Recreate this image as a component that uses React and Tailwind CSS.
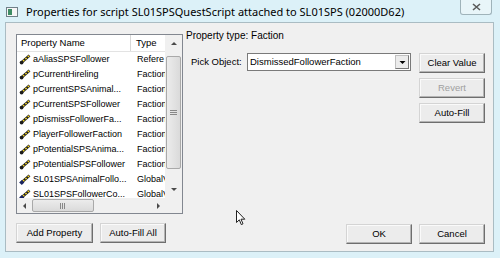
import React from "react";

const F = { fontFamily: "'Liberation Sans', Arial, sans-serif" };

function PropIcon({ global }) {
  return (
    <svg width="12" height="11" viewBox="0 0 12 11" className="shrink-0">
      <path d="M2.5 8.5 L10.5 1.5" stroke="#1c1c1c" strokeWidth="2.6" />
      <path d="M4 7.2 L5.2 6.1" stroke="#f0d020" strokeWidth="1.6" />
      <path d="M6.4 5.1 L7.6 4" stroke="#f0d020" strokeWidth="1.6" />
      <path d="M8.8 3 L10 1.9" stroke="#f0d020" strokeWidth="1.6" />
      {global ? (
        <path d="M2.8 6 L5.4 8.5 L2.8 11 L0.2 8.5 Z" fill="#1a2460" />
      ) : (
        <circle cx="2.6" cy="8.6" r="1.9" fill="#1c1c1c" />
      )}
    </svg>
  );
}

const rows = [
  ["aAliasSPSFollower", "Refere", false],
  ["pCurrentHireling", "Faction", false],
  ["pCurrentSPSAnimal...", "Faction", false],
  ["pCurrentSPSFollower", "Faction", false],
  ["pDismissFollowerFa...", "Faction", false],
  ["PlayerFollowerFaction", "Faction", false],
  ["pPotentialSPSAnima...", "Faction", false],
  ["pPotentialSPSFollower", "Faction", false],
  ["SL01SPSAnimalFollo...", "GlobalV", true],
  ["SL01SPSFollowerCo...", "GlobalV", true],
];

function Btn({ children, w, disabled }) {
  return (
    <div
      className={`flex items-center justify-center h-[20px] border border-[#d4d4d4] border-r-[#6e6e6e] border-b-[#6e6e6e] bg-[#ececec] text-[9.5px] shadow-[inset_-1px_-1px_0_#b4b4b4,inset_1px_1px_0_#fafafa] ${disabled ? "text-[#a0a0a0]" : "text-black"}`}
      style={{ width: w }}
    >
      {children}
    </div>
  );
}

function Arrow({ dir }) {
  const d = {
    up: "M1 5 L4 2 L7 5 Z",
    down: "M1 2 L4 5 L7 2 Z",
    left: "M5 1 L2 4 L5 7 Z",
    right: "M3 1 L6 4 L3 7 Z",
  }[dir];
  return (
    <svg width="8" height="8" viewBox="0 0 8 8">
      <path d={d} fill="#4a4a4a" />
    </svg>
  );
}

export default function App() {
  return (
    <div className="relative w-[500px] h-[258px] bg-[#dcf1f8] overflow-hidden" style={F}>
      {/* title bar */}
      <div className="flex items-start h-[22px]">
        <div className="ml-[6px] mt-[7px] w-[12px] h-[10px] border border-[#6f8088] bg-[#f6f6f6] flex">
          <div className="ml-[1px] mt-[1px] w-[4px] h-[6px] bg-[#3e8c64]" />
        </div>
        <div
          className="ml-[8px] mt-[4px] text-[11px] leading-[15px] text-black whitespace-nowrap"
          style={{ fontFamily: "'Noto Sans', 'Open Sans', sans-serif" }}
        >
          Properties for script SL01SPSQuestScript attached to SL01SPS (02000D62)
        </div>
        <div className="ml-auto mr-[8px] w-[32px] h-[15px] border border-[#9fb3ba] border-t-0 rounded-b-[3px] bg-[#e8f5f9] flex items-center justify-center">
          <svg width="9" height="8" viewBox="0 0 9 8">
            <path d="M1 1 L8 7 M8 1 L1 7" stroke="#5a5a5a" strokeWidth="1.6" />
          </svg>
        </div>
      </div>

      {/* client */}
      <div className="ml-[5px] w-[489px] h-[230px] border border-[#aabcc3] bg-[#f0f0f0] flex">
        {/* left */}
        <div className="pl-[10px] pt-[11px] flex flex-col">
          <div className="w-[167px] h-[180px] border border-[#828790] bg-white flex flex-col">
            <div className="flex flex-1 min-h-0">
              <div className="w-[148px] flex flex-col overflow-hidden">
                <div className="flex h-[17px] border-b border-[#e3e3e3] text-[9.5px] shrink-0">
                  <div className="w-[114px] pl-[4px] flex items-center border-r border-[#d8d8d8]">Property Name</div>
                  <div className="pl-[5px] flex items-center">Type</div>
                </div>
                {rows.map(([n, t, g]) => (
                  <div key={n} className="flex h-[15px] items-center text-[9px] whitespace-nowrap shrink-0">
                    <div className="w-[114px] pl-[2px] flex items-center gap-[2px] overflow-hidden">
                      <PropIcon global={g} />
                      <span>{n}</span>
                    </div>
                    <div className="pl-[6px] overflow-hidden w-[34px]">{t}</div>
                  </div>
                ))}
              </div>
              {/* vertical scrollbar */}
              <div className="w-[17px] bg-[#f0f0f0] flex flex-col items-center">
                <div className="h-[17px] flex items-center justify-center">
                  <Arrow dir="up" />
                </div>
                <div className="h-[4px]" />
                <div className="w-[15px] h-[113px] border border-[#a9a9a9] bg-gradient-to-r from-[#ececec] to-[#dadada] rounded-[2px] flex items-center justify-center">
                  <svg width="7" height="6" viewBox="0 0 7 6">
                    <path d="M0 0.5 H7 M0 2.5 H7 M0 4.5 H7" stroke="#888" strokeWidth="1" />
                  </svg>
                </div>
                <div className="flex-1" />
                <div className="h-[17px] flex items-center justify-center">
                  <Arrow dir="down" />
                </div>
              </div>
            </div>
            {/* horizontal scrollbar */}
            <div className="flex h-[15px] shrink-0">
              <div className="w-[148px] bg-[#f0f0f0] flex items-center">
                <div className="w-[15px] flex items-center justify-center">
                  <Arrow dir="left" />
                </div>
                <div className="w-[62px] h-[13px] border border-[#a9a9a9] bg-gradient-to-b from-[#ececec] to-[#dadada] rounded-[2px] flex items-center justify-center">
                  <svg width="6" height="6" viewBox="0 0 6 6">
                    <path d="M0.5 0 V6 M2.5 0 V6 M4.5 0 V6" stroke="#888" strokeWidth="1" />
                  </svg>
                </div>
                <div className="flex-1" />
                <div className="w-[15px] flex items-center justify-center">
                  <Arrow dir="right" />
                </div>
              </div>
              <div className="flex-1 bg-[#f0f0f0]" />
            </div>
          </div>
          <div className="flex gap-[7px] mt-[9px]">
            <Btn w="77px">Add Property</Btn>
            <Btn w="66px">Auto-Fill All</Btn>
          </div>
        </div>

        {/* right */}
        <div className="flex-1 flex flex-col pl-[3px] pr-[8px] pt-[7px]">
          <div className="text-[10px] h-[12px] leading-[12px]">Property type: Faction</div>
          <div className="flex mt-[11px]">
            <div className="flex-1 flex items-start">
              <div className="w-[56px] ml-[5px] h-[18px] flex items-center text-[9.5px]">Pick Object:</div>
              <div className="w-[164px] h-[18px] border border-[#7a7a7a] bg-white flex items-center">
                <div className="flex-1 pl-[2px] text-[9.5px]">DismissedFollowerFaction</div>
                <div className="w-[14px] h-[14px] mr-[1px] bg-[#ececec] border border-[#c0c0c0] border-r-[#777] border-b-[#777] flex items-center justify-center">
                  <svg width="7" height="5" viewBox="0 0 7 5">
                    <path d="M0.5 1 L3.5 4 L6.5 1 Z" fill="#000" />
                  </svg>
                </div>
              </div>
            </div>
            <div className="flex flex-col gap-[5px] w-[66px]">
              <Btn w="66px">Clear Value</Btn>
              <Btn w="66px" disabled>Revert</Btn>
              <Btn w="66px">Auto-Fill</Btn>
            </div>
          </div>
          <div className="flex-1" />
          <div className="flex justify-end gap-[7px] mb-[7px]">
            <Btn w="66px">OK</Btn>
            <Btn w="66px">Cancel</Btn>
          </div>
        </div>
      </div>

      {/* mouse cursor */}
      <svg className="absolute left-[236px] top-[210px]" width="10" height="16" viewBox="0 0 10 16">
        <path d="M0.5 0.5 L0.5 12.5 L3.3 9.8 L5.3 14.6 L7 13.8 L5 9.2 L8.8 9.2 Z" fill="white" stroke="#222" strokeWidth="1" />
      </svg>
    </div>
  );
}
